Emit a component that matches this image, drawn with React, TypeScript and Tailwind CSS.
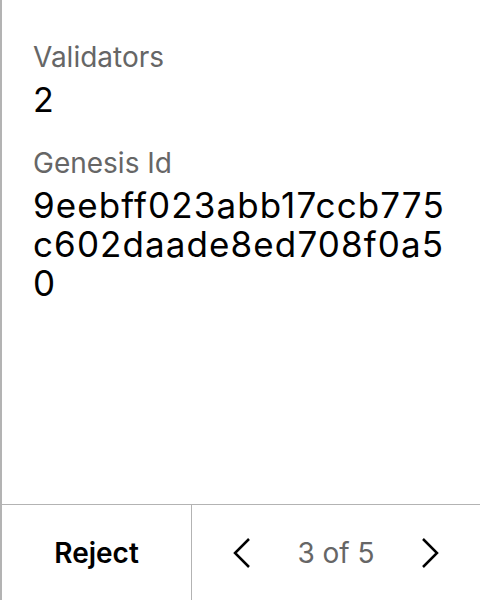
import React from 'react'

export default function App() {
  return (
    <div
      className="flex h-[600px] w-[480px] flex-col border-l-2 border-[#b3b3b3] bg-white text-black"
      style={{ fontFamily: 'Inter, "Noto Sans", sans-serif' }}
    >
      <div className="flex-1 pl-[31px] pr-[28px] pt-[40px]">
        <div className="text-[28px] leading-[34px] text-[#666666]">Validators</div>
        <div className="mt-[7px] text-[34px] leading-[38px]">2</div>
        <div className="mt-[27px] text-[28px] leading-[34px] text-[#666666]">Genesis Id</div>
        <div className="mt-[6px] break-all text-[35px] leading-[39px] tracking-[1.1px]">
          9eebff023abb17ccb775c602daade8ed708f0a50
        </div>
      </div>
      <div className="flex h-[96px] border-t border-[#b3b3b3]">
        <button className="flex w-[190px] items-center justify-center border-r border-[#b3b3b3] text-[28px] font-semibold">
          Reject
        </button>
        <div className="flex flex-1 items-center justify-center gap-[45px]">
          <button className="flex items-center justify-center">
            <svg width="20" height="32" viewBox="0 0 20 32" fill="none" stroke="#000" strokeWidth="2.5">
              <path d="M17 2 3 16l14 14" />
            </svg>
          </button>
          <span className="text-[28px] text-[#666666]">3 of 5</span>
          <button className="flex items-center justify-center">
            <svg width="20" height="32" viewBox="0 0 20 32" fill="none" stroke="#000" strokeWidth="2.5">
              <path d="m3 2 14 14L3 30" />
            </svg>
          </button>
        </div>
      </div>
    </div>
  )
}
